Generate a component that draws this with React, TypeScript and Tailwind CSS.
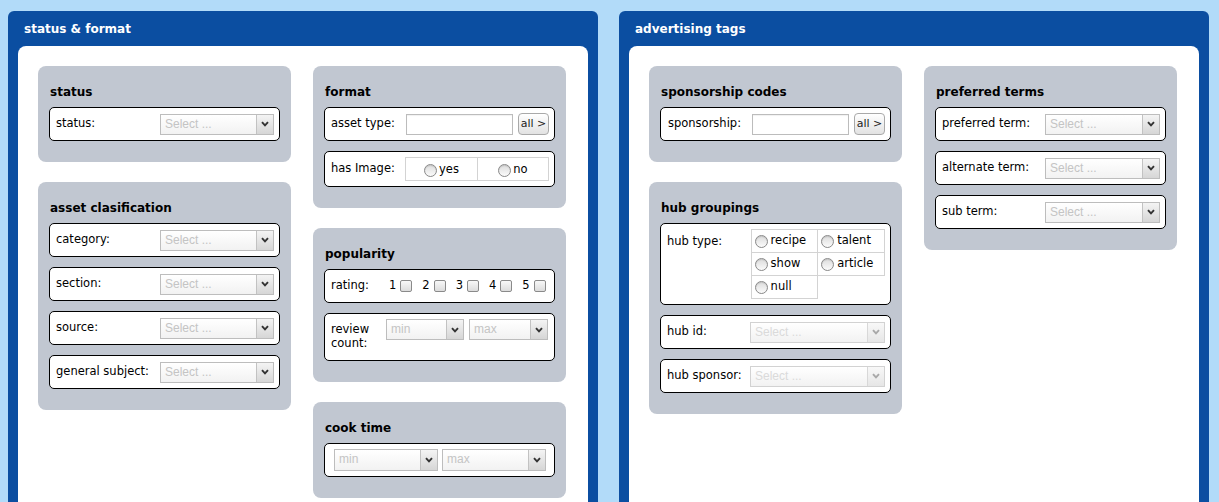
import type { ReactNode } from 'react';

const Chevron = ({ dim = false }: { dim?: boolean }) => (
  <svg width="8" height="6" viewBox="0 0 8 6">
    <path d="M1 1.2 L4 4.4 L7 1.2" fill="none" stroke={dim ? '#a8a8a8' : '#333'} strokeWidth="1.9" />
  </svg>
);

function Select({ className, ph = 'Select ...', dim = false }: { className: string; ph?: string; dim?: boolean }) {
  return (
    <div className={`flex h-[21px] border ${dim ? 'border-[#d2d2d2]' : 'border-[#bdbdbd]'} bg-gradient-to-b from-white to-[#f2f2f2] ${className}`}>
      <span className={`flex-1 pl-[4px] leading-[19px] text-[12px] font-['Liberation_Sans',sans-serif] ${dim ? 'text-[#dadada]' : 'text-[#c4c4c4]'}`}>{ph}</span>
      <span className={`w-[17px] flex items-center justify-center border-l ${dim ? 'border-[#d8d8d8] from-[#f8f8f8] to-[#e6e6e6]' : 'border-[#c2c2c2] from-[#f4f4f4] to-[#d6d6d6]'} bg-gradient-to-b`}>
        <Chevron dim={dim} />
      </span>
    </div>
  );
}

const Radio = () => (
  <span className="inline-block w-[13px] h-[13px] rounded-full border border-[#8a8a8a] bg-gradient-to-b from-[#dcdcdc] to-[#fbfbfb] shadow-[inset_0_1px_1px_rgba(0,0,0,0.12)]" />
);

const Check = () => (
  <span className="inline-block w-[12px] h-[12px] rounded-[2px] border border-[#8a8a8a] bg-gradient-to-b from-[#f8f8f8] to-[#dcdcdc]" />
);

const AllButton = () => (
  <button className="w-[31px] h-[22px] rounded-[4px] border border-[#a9a9a9] bg-gradient-to-b from-white to-[#e2e2e2] text-[11px] leading-[20px] text-[#222]">
    all &gt;
  </button>
);

const TextInput = ({ className }: { className: string }) => (
  <span className={`h-[21px] border border-[#bcbcbc] bg-white shadow-[inset_0_1px_1px_rgba(0,0,0,0.06)] ${className}`} />
);

function Panel({ title, children }: { title: string; children: ReactNode }) {
  return (
    <section className="w-[590px] h-[520px] shrink-0 flex flex-col bg-[#0b4ea1] rounded-t-[6px]">
      <h2 className="h-[35px] flex items-center pl-[16px] text-white text-[12px] font-bold">{title}</h2>
      <div className="flex-1 mx-[10px] bg-white rounded-t-[8px] pl-[20px] pt-[20px] flex gap-[22px] items-start">
        {children}
      </div>
    </section>
  );
}

const Column = ({ children }: { children: ReactNode }) => (
  <div className="w-[253px] flex flex-col gap-[20px]">{children}</div>
);

function Box({ title, children }: { title: string; children: ReactNode }) {
  return (
    <div className="bg-[#c1c7d1] rounded-[8px] px-[11px] pt-[18px] pb-[21px]">
      <h3 className="h-[16px] leading-[16px] text-[12px] font-bold mb-[7px] pl-[1px]">{title}</h3>
      <div className="flex flex-col gap-[10px]">{children}</div>
    </div>
  );
}

const Row = ({ children, className = 'h-[34px] items-center' }: { children: ReactNode; className?: string }) => (
  <div className={`flex border border-black rounded-[5px] bg-white pl-[6px] pr-[5px] ${className}`}>{children}</div>
);

const SelectRow = ({ label, dim = false, className = 'w-[114px]' }: { label: string; dim?: boolean; className?: string }) => (
  <Row>
    <span className="flex-1">{label}</span>
    <Select className={className} dim={dim} />
  </Row>
);

function RadioCell({ label, className = '' }: { label: string; className?: string }) {
  return (
    <td className={`border border-[#d3d3d3] h-[23px] ${className}`}>
      <span className="flex items-center gap-[3px]">
        <Radio />
        {label}
      </span>
    </td>
  );
}

export default function App() {
  return (
    <div className="h-[502px] overflow-hidden bg-[#b2dbf9] flex gap-[21px] pl-[8px] pt-[11px] font-['DejaVu_Sans',sans-serif] text-[11.5px] text-black">
      <Panel title="status & format">
        <Column>
          <Box title="status">
            <SelectRow label="status:" />
          </Box>
          <Box title="asset clasification">
            <SelectRow label="category:" />
            <SelectRow label="section:" />
            <SelectRow label="source:" />
            <SelectRow label="general subject:" />
          </Box>
        </Column>
        <Column>
          <Box title="format">
            <Row>
              <span className="w-[75px]">asset type:</span>
              <TextInput className="w-[108px]" />
              <span className="ml-[5px]"><AllButton /></span>
            </Row>
            <Row className="h-[36px] items-center">
              <span className="w-[75px]">has Image:</span>
              <table className="border-collapse">
                <tbody>
                  <tr>
                    <td className="border border-[#d3d3d3] w-[72px] h-[23px]">
                      <span className="flex items-center justify-center gap-[2px] pt-[2px]"><Radio />yes</span>
                    </td>
                    <td className="border border-[#d3d3d3] w-[72px] h-[23px]">
                      <span className="flex items-center justify-center gap-[2px] pt-[2px]"><Radio />no</span>
                    </td>
                  </tr>
                </tbody>
              </table>
            </Row>
          </Box>
          <Box title="popularity">
            <Row>
              <span className="w-[58px]">rating:</span>
              <div className="flex items-center gap-[10px]">
                {['1', '2', '3', '4', '5'].map(n => (
                  <span key={n} className="flex items-center gap-[4px]">
                    {n}
                    <Check />
                  </span>
                ))}
              </div>
            </Row>
            <Row className="h-[48px] items-start pt-[5px]">
              <span className="w-[55px] leading-[14px] pt-[3px]">review<br />count:</span>
              <Select className="w-[78px]" ph="min" />
              <Select className="w-[79px] ml-[5px]" ph="max" />
            </Row>
          </Box>
          <Box title="cook time">
            <Row className="h-[34px] items-center pl-[9px]">
              <Select className="w-[104px] h-[22px]" ph="min" />
              <Select className="w-[104px] h-[22px] ml-[4px]" ph="max" />
            </Row>
          </Box>
        </Column>
      </Panel>

      <Panel title="advertising tags">
        <Column>
          <Box title="sponsorship codes">
            <Row className="h-[34px] items-center pl-[7px]">
              <span className="w-[84px]">sponsorship:</span>
              <TextInput className="w-[98px]" />
              <span className="ml-[5px]"><AllButton /></span>
            </Row>
          </Box>
          <Box title="hub groupings">
            <Row className="items-start py-[5px] pl-[6px]">
              <span className="w-[84px] pt-[4px]">hub type:</span>
              <table className="border-collapse">
                <tbody>
                  <tr>
                    <RadioCell label="recipe" className="w-[67px] pl-[3px]" />
                    <RadioCell label="talent" className="w-[67px] pl-[3px]" />
                  </tr>
                  <tr>
                    <RadioCell label="show" className="pl-[3px]" />
                    <RadioCell label="article" className="pl-[3px]" />
                  </tr>
                  <tr>
                    <RadioCell label="null" className="pl-[3px]" />
                  </tr>
                </tbody>
              </table>
            </Row>
            <SelectRow label="hub id:" dim className="w-[135px]" />
            <SelectRow label="hub sponsor:" dim className="w-[135px]" />
          </Box>
        </Column>
        <Column>
          <Box title="preferred terms">
            <SelectRow label="preferred term:" className="w-[115px]" />
            <SelectRow label="alternate term:" className="w-[115px]" />
            <SelectRow label="sub term:" className="w-[115px]" />
          </Box>
        </Column>
      </Panel>
    </div>
  );
}
